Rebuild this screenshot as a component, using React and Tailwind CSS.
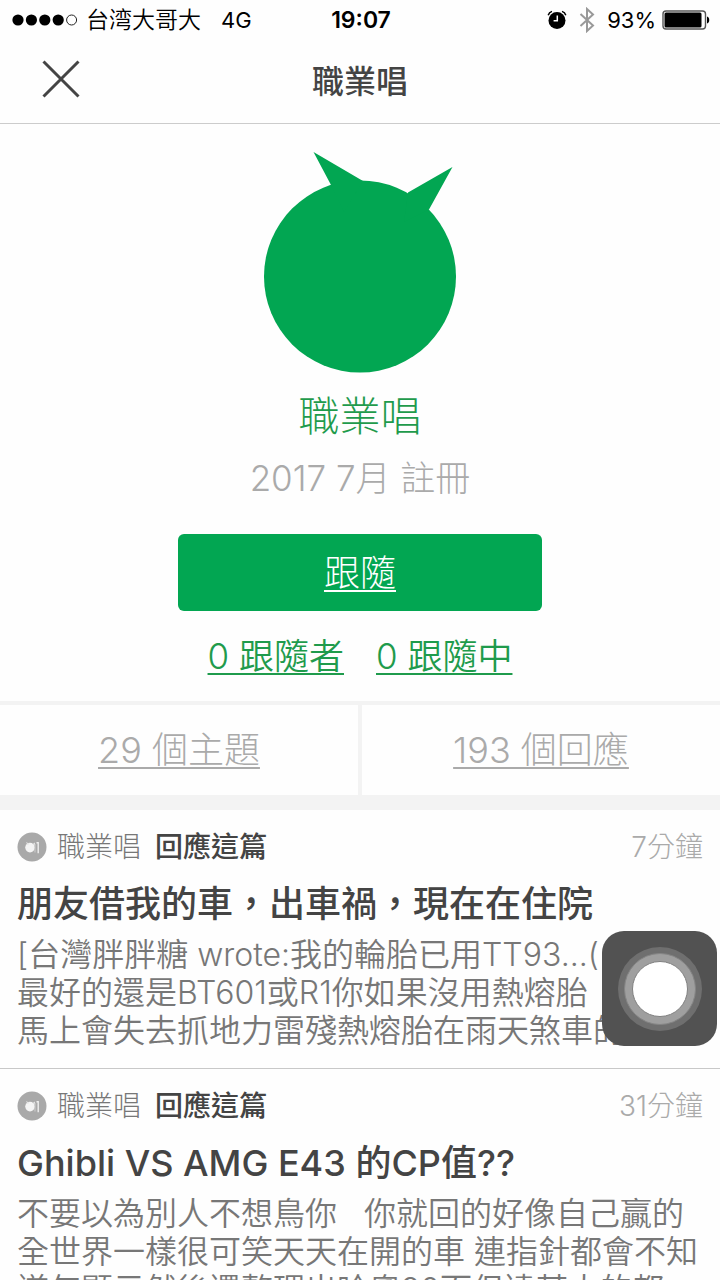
const replies = [
  {
    id: 1,
    author: '職業唱',
    action: '回應這篇',
    time: '7分鐘',
    title: '朋友借我的車，出車禍，現在在住院',
    lines: [
      '[台灣胖胖糖 wrote:我的輪胎已用TT93...(',
      '最好的還是BT601或R1你如果沒用熱熔胎',
      '馬上會失去抓地力雷殘熱熔胎在雨天煞車的',
    ],
  },
  {
    id: 2,
    author: '職業唱',
    action: '回應這篇',
    time: '31分鐘',
    title: 'Ghibli VS AMG E43 的CP值??',
    lines: [
      '不要以為別人不想鳥你\u00a0\u00a0 你就回的好像自己贏的',
      '全世界一樣很可笑天天在開的車 連指針都會不知',
      '道怎顯示然後還整理出哈奧90而但達某大的都',
    ],
  },
];

function SignalDots() {
  return (
    <svg width="66" height="12" viewBox="0 0 66 12" aria-hidden="true">
      <circle cx="6" cy="6" r="5.6" />
      <circle cx="19.4" cy="6" r="5.6" />
      <circle cx="32.8" cy="6" r="5.6" />
      <circle cx="46.2" cy="6" r="5.6" />
      <circle cx="59.6" cy="6" r="5" fill="none" stroke="#222" />
    </svg>
  );
}

function AlarmIcon() {
  return (
    <svg width="20" height="20" viewBox="0 0 20 20" aria-hidden="true">
      <circle cx="10" cy="10.5" r="8.5" />
      <path
        d="M1.2 5.2C1.8 3.2 3 2 5 1.4M18.8 5.2C18.2 3.2 17 2 15 1.4"
        fill="none"
        stroke="#000"
        strokeWidth="1.5"
      />
      <path d="M10.3 5.5v5.3H6.6" fill="none" stroke="#fff" strokeWidth="1.5" />
    </svg>
  );
}

function BluetoothIcon() {
  return (
    <svg width="16" height="26" viewBox="0 0 16 26" aria-hidden="true">
      <path
        d="M1.5 7l12.5 11.5L8 24V2l6 5.5L1.5 19"
        fill="none"
        stroke="#999"
        strokeWidth="2"
      />
    </svg>
  );
}

function BatteryIcon() {
  return (
    <svg width="48" height="20" viewBox="0 0 48 20" aria-hidden="true">
      <rect x="1" y="1" width="42.5" height="18" rx="3" fill="none" stroke="#555" strokeWidth="1.4" />
      <rect x="2.5" y="2.5" width="37" height="15" rx="1.5" />
      <path d="M45 6.500c3 .6 3 6.400 0 7z" />
    </svg>
  );
}

function StatusBar() {
  return (
    <div className="grid h-10 grid-cols-[1fr_auto_1fr] items-center pr-2.5 pl-3 text-[22px] text-black">
      <div className="flex items-center gap-2">
        <SignalDots />
        <span className="text-[23px] font-[350]">台湾大哥大</span>
        <span className="ml-3">4G</span>
      </div>
      <span className="text-[23px] font-semibold">19:07</span>
      <div className="flex items-center justify-end gap-1.5">
        <AlarmIcon />
        <span className="mx-1.5">
          <BluetoothIcon />
        </span>
        <span>93%</span>
        <BatteryIcon />
      </div>
    </div>
  );
}

function Avatar() {
  return (
    <svg width="192" height="222" viewBox="0 0 192 222" aria-hidden="true">
      <g fill="#02a652">
        <circle cx="96" cy="124.500" r="96" />
        <path d="M49.500 0L99 29 80 60 67 33zM188.500 15L144 40.500 140 70 165 57.500z" />
      </g>
    </svg>
  );
}

function MemberIcon() {
  return (
    <svg width="30" height="30" viewBox="0 0 30 30" aria-hidden="true">
      <circle cx="15" cy="15" r="14.5" fill="#a9a9a9" />
      <circle cx="13" cy="15.6" r="4.8" fill="#f4f4f4" />
      <path d="M9 10l3.500 1.800-2 1.200z" fill="#e4e4e4" />
      <path d="M18 10.500l-2.500 1.500 2.500 2z" fill="#e4e4e4" />
      <path d="M18 12v8.500" stroke="#cfcfcf" />
      <path d="M19.500 10.700h1.700v10.500" fill="none" stroke="#eee" strokeWidth="1.4" />
    </svg>
  );
}

function Reply({ reply }) {
  return (
    <article className="border-b border-[#c8c8c8] px-[17px] pt-4 pb-[18px]">
      <div className="flex h-[42px] items-center text-[28px] font-light">
        <MemberIcon />
        <span className="ml-2.5 text-[#777]">{reply.author}</span>
        <span className="ml-3.5 font-medium text-[#444]">{reply.action}</span>
        <time className="ml-auto text-[#aaa]">{reply.time}</time>
      </div>
      <h2 className="mt-3 text-4xl leading-[48px] font-medium text-[#444]">
        {reply.title}
      </h2>
      <p className="mt-2 text-[32px] leading-[38px] font-[350] whitespace-nowrap text-[#777]">
        {reply.lines.map((line) => (
          <span key={line} className="block">
            {line}
          </span>
        ))}
      </p>
    </article>
  );
}

export default function App() {
  return (
    <div
      lang="zh-Hant"
      className="h-screen overflow-hidden bg-[#fefefe] font-['Inter','Noto_Sans_CJK_TC',sans-serif]"
    >
      <StatusBar />
      <header className="grid h-[84px] grid-cols-[1fr_auto_1fr] items-center border-b border-[#ccc] px-[42px]">
        <button type="button" aria-label="關閉" className="justify-self-start pb-1.5">
          <svg width="38" height="38" viewBox="0 0 38 38" aria-hidden="true" className="block">
            <path d="M1.500 1.500l35 35M36.500 1.500l-35 35" stroke="#444" strokeWidth="3" />
          </svg>
        </button>
        <h1 className="text-[32px] font-medium text-[#444]">職業唱</h1>
      </header>

      <section className="flex flex-col items-center px-6 pt-7 pb-5 font-light">
        <Avatar />
        <p className="mt-3.5 text-[41px] leading-[56px] text-[#1f9b4c]">職業唱</p>
        <p className="mt-2.5 text-[35px] leading-[48px] text-[#aaa]">
          2017 7月 註冊
        </p>
        <button
          type="button"
          className="mt-8 h-[77px] w-[364px] rounded-md bg-[#02a652] text-4xl text-white underline decoration-2 underline-offset-4 [text-decoration-skip-ink:none]"
        >
          跟隨
        </button>
        <div className="mt-5 flex gap-8 text-[35px] leading-[50px] font-[350] text-[#1f9b4c] underline-offset-4 [text-decoration-skip-ink:none]">
          <a href="#followers" className="underline decoration-2">
            0 跟隨者
          </a>
          <a href="#following" className="underline decoration-2">
            0 跟隨中
          </a>
        </div>
      </section>

      <nav className="grid grid-cols-2 gap-1 border-t-4 border-b-[15px] border-[#f3f3f3] bg-[#f3f3f3] text-center text-4xl leading-[90px] font-light text-[#aaa] underline-offset-4 [text-decoration-skip-ink:none]">
        <a href="#topics" className="bg-[#fefefe] underline decoration-2">
          29 個主題
        </a>
        <a href="#replies" className="bg-[#fefefe] underline decoration-2">
          193 個回應
        </a>
      </nav>

      <main>
        {replies.map((reply) => (
          <Reply key={reply.id} reply={reply} />
        ))}
      </main>

      <button
        type="button"
        aria-label="輔助觸控"
        className="fixed top-[931px] right-[3px] flex size-[115px] items-center justify-center rounded-[22px] bg-[#525252]"
      >
        <svg width="86" height="86" viewBox="0 0 86 86" aria-hidden="true">
          <circle cx="43" cy="43" r="42" fill="#6f6f6f" />
          <circle cx="43" cy="43" r="35.5" fill="#9f9f9f" stroke="#858585" />
          <circle cx="43" cy="43" r="27.5" fill="#fff" stroke="#808080" />
        </svg>
      </button>
    </div>
  );
}
